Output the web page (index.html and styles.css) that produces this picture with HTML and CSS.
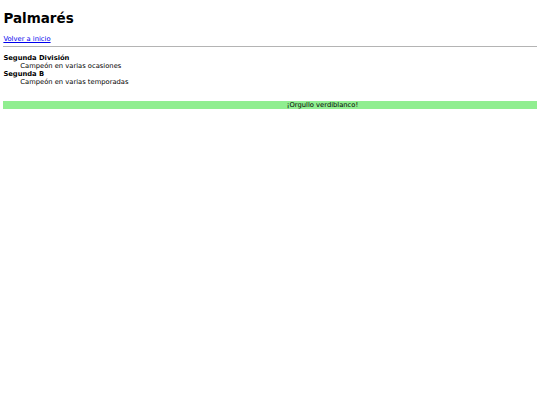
FILE: index.html
```html
<!DOCTYPE html>
<html lang="es">
<head>
<meta charset="utf-8">
<title>Palmarés</title>
<link rel="stylesheet" href="styles.css">
</head>
<body>
<h1 class="title">Palmarés</h1>
<a class="back" href="#">Volver a inicio</a>
<hr class="rule">
<dl class="honours">
  <dt>Segunda División</dt>
  <dd>Campeón en varias ocasiones</dd>
  <dt>Segunda B</dt>
  <dd>Campeón en varias temporadas</dd>
</dl>
<footer class="footer">¡Orgullo verdiblanco!</footer>
</body>
</html>
```
FILE: styles.css
```css
body {
  margin: 3.4px;
  font-family: "DejaVu Sans", sans-serif;
  font-size: 6.75px;
  color: #000;
  background: #fff;
}
.title {
  font-size: 13.5px;
  margin: 6.5px 0 9px;
}
.back {
  color: #0000ee;
}
.rule {
  border: none;
  border-top: 1px solid #b4b4b4;
  margin: 3.4px 0;
}
.honours {
  margin: 6.75px 0;
}
.honours dt {
  font-weight: bold;
}
.honours dd {
  margin-left: 16.9px;
}
.footer {
  margin-top: 14.5px;
  background: #90ee90;
  text-align: center;
  padding-left: 105px;
}
```
